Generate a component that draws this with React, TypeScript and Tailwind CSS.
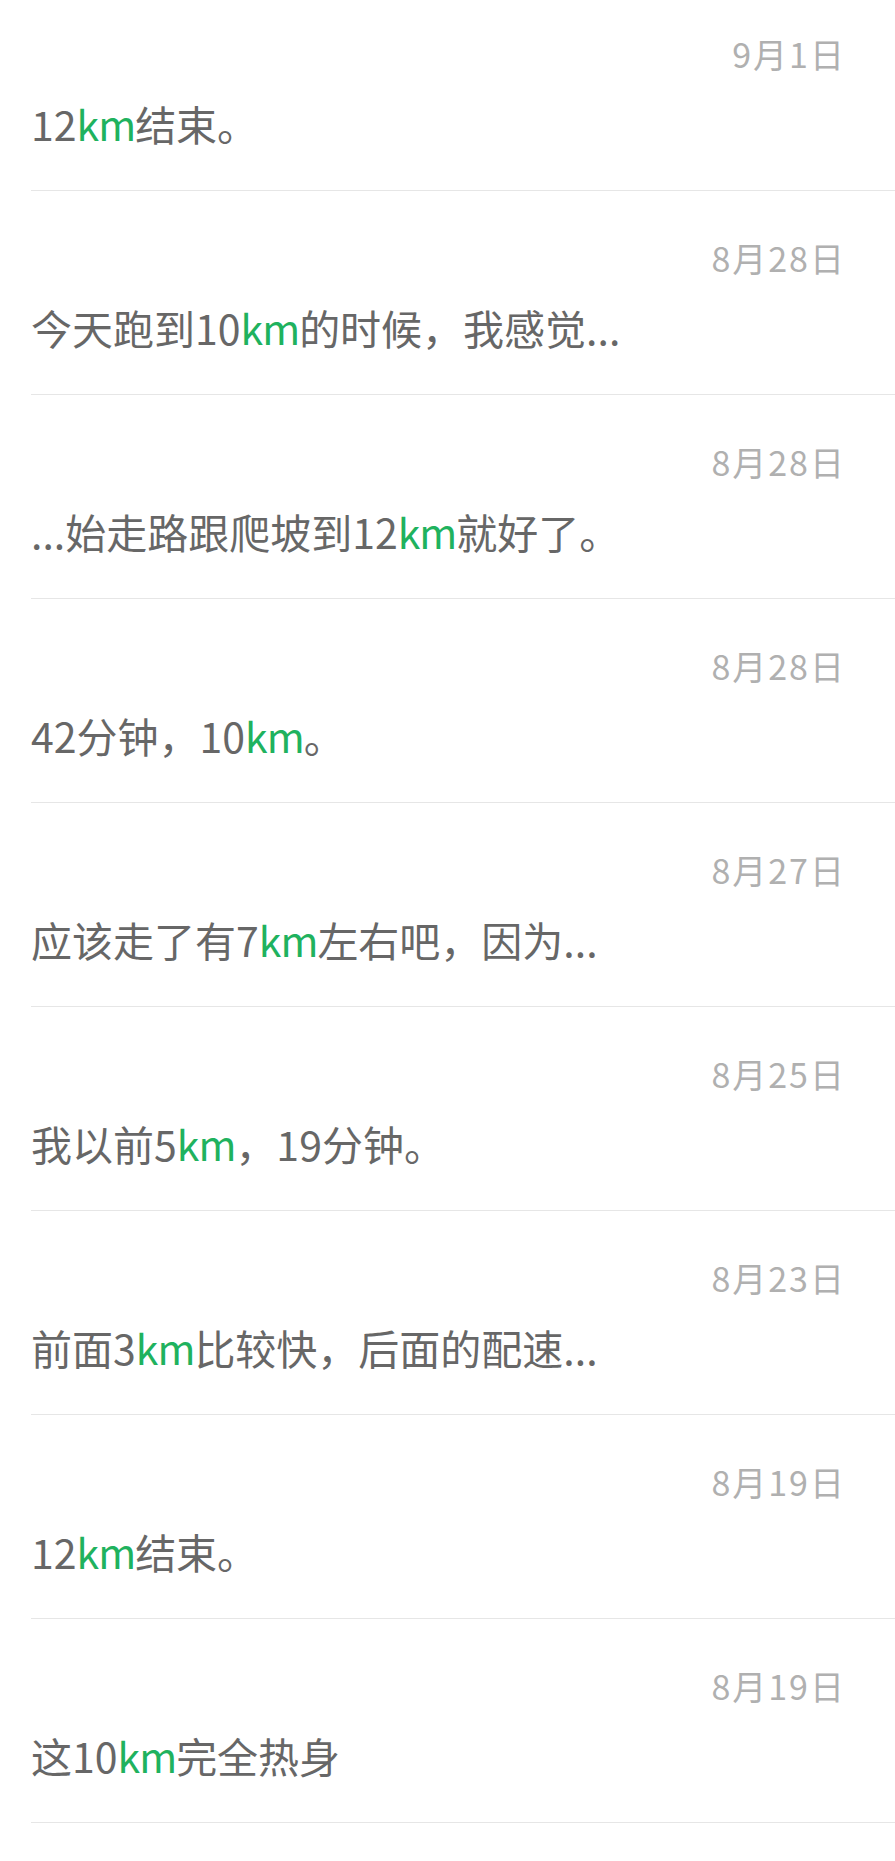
import React from "react";

type Item = { date: string; parts: (string | { g: string })[] };

const items: Item[] = [
  { date: "9月1日", parts: ["12", { g: "km" }, "结束。"] },
  { date: "8月28日", parts: ["今天跑到10", { g: "km" }, "的时候，我感觉..."] },
  { date: "8月28日", parts: ["...始走路跟爬坡到12", { g: "km" }, "就好了。"] },
  { date: "8月28日", parts: ["42分钟，10", { g: "km" }, "。"] },
  { date: "8月27日", parts: ["应该走了有7", { g: "km" }, "左右吧，因为..."] },
  { date: "8月25日", parts: ["我以前5", { g: "km" }, "，19分钟。"] },
  { date: "8月23日", parts: ["前面3", { g: "km" }, "比较快，后面的配速..."] },
  { date: "8月19日", parts: ["12", { g: "km" }, "结束。"] },
  { date: "8月19日", parts: ["这10", { g: "km" }, "完全热身"] },
];

export default function App() {
  return (
    <div
      className="w-[895px] min-h-[1861px] bg-white"
      style={{ fontFamily: '"Noto Sans CJK SC", "Noto Sans", sans-serif' }}
    >
      {items.map((it, i) => (
        <div
          key={i}
          className={`ml-[31px] border-b border-[#e6e6e6] pb-[43px] ${i === 0 ? "pt-[34px]" : "pt-[47px]"}`}
        >
          <div className="flex justify-end pr-[49px] text-[34px] leading-[40px] tracking-[2px] text-[#b0b0b0]">
            {it.date}
          </div>
          <div className="mt-[25px] text-[41px] leading-[48px] text-[#676767] whitespace-nowrap">
            {it.parts.map((p, j) =>
              typeof p === "string" ? (
                <span key={j}>{p}</span>
              ) : (
                <span key={j} className="text-[#1fb25e] tracking-[-1px]">
                  {p.g}
                </span>
              )
            )}
          </div>
        </div>
      ))}
    </div>
  );
}
